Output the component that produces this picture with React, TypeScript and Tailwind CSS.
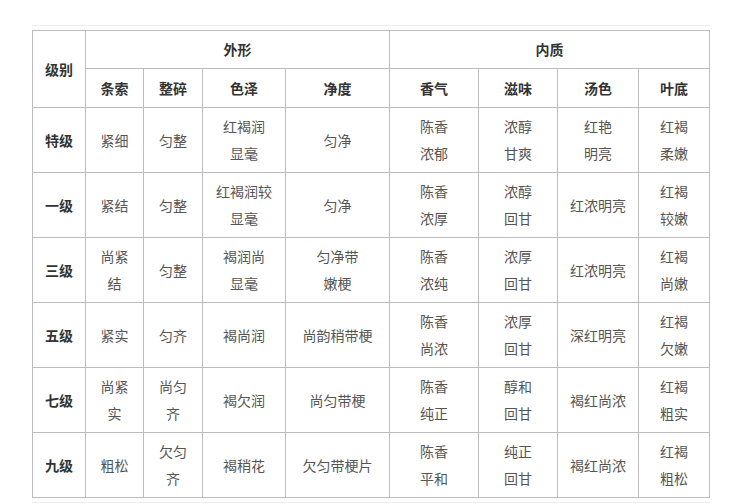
import React from "react";

// One grade row: name plus cell texts, each cell split into its display lines
interface GradeRow {
  grade: string;
  cells: string[][];
}

const colWidths = [53, 58, 59, 83, 104, 89, 79, 81, 71];

const subHeads = ["条索", "整碎", "色泽", "净度", "香气", "滋味", "汤色", "叶底"];

const rows: GradeRow[] = [
  {
    grade: "特级",
    cells: [["紧细"], ["匀整"], ["红褐润", "显毫"], ["匀净"], ["陈香", "浓郁"], ["浓醇", "甘爽"], ["红艳", "明亮"], ["红褐", "柔嫩"]],
  },
  {
    grade: "一级",
    cells: [["紧结"], ["匀整"], ["红褐润较", "显毫"], ["匀净"], ["陈香", "浓厚"], ["浓醇", "回甘"], ["红浓明亮"], ["红褐", "较嫩"]],
  },
  {
    grade: "三级",
    cells: [["尚紧", "结"], ["匀整"], ["褐润尚", "显毫"], ["匀净带", "嫩梗"], ["陈香", "浓纯"], ["浓厚", "回甘"], ["红浓明亮"], ["红褐", "尚嫩"]],
  },
  {
    grade: "五级",
    cells: [["紧实"], ["匀齐"], ["褐尚润"], ["尚韵稍带梗"], ["陈香", "尚浓"], ["浓厚", "回甘"], ["深红明亮"], ["红褐", "欠嫩"]],
  },
  {
    grade: "七级",
    cells: [["尚紧", "实"], ["尚匀", "齐"], ["褐欠润"], ["尚匀带梗"], ["陈香", "纯正"], ["醇和", "回甘"], ["褐红尚浓"], ["红褐", "粗实"]],
  },
  {
    grade: "九级",
    cells: [["粗松"], ["欠匀", "齐"], ["褐稍花"], ["欠匀带梗片"], ["陈香", "平和"], ["纯正", "回甘"], ["褐红尚浓"], ["红褐", "粗松"]],
  },
];

const cellBase = "border border-[#bdbdbd] text-center align-middle p-0";

const TeaGradeTable: React.FC = () => {
  return (
    <div
      className="min-h-[504px] w-[736px] bg-white"
      style={{ fontFamily: '"Noto Sans CJK SC", "Noto Sans", sans-serif' }}
    >
      <div className="ml-[32px] pt-[25px]">
        <div className="w-[678px] border-t border-b border-[#ececec] py-[4px]">
          <table className="w-[677px] table-fixed border-collapse text-[14px]">
            <colgroup>
              {colWidths.map((w, i) => (
                <col key={i} style={{ width: w }} />
              ))}
            </colgroup>
            <thead>
              <tr className="h-[38px]">
                <th rowSpan={2} className={`${cellBase} font-bold text-[#333]`}>
                  级别
                </th>
                <th colSpan={4} className={`${cellBase} font-bold text-[#333]`}>
                  外形
                </th>
                <th colSpan={4} className={`${cellBase} font-bold text-[#333]`}>
                  内质
                </th>
              </tr>
              <tr className="h-[39px]">
                {subHeads.map((h) => (
                  <th key={h} className={`${cellBase} font-bold text-[#333]`}>
                    {h}
                  </th>
                ))}
              </tr>
            </thead>
            <tbody>
              {rows.map((row) => (
                <tr key={row.grade} className="h-[65px]">
                  <td className={`${cellBase} font-bold text-[#333]`}>{row.grade}</td>
                  {row.cells.map((lines, i) => (
                    <td key={i} className={`${cellBase} text-[#555] leading-[27px]`}>
                      {lines.map((l, j) => (
                        <div key={j}>{l}</div>
                      ))}
                    </td>
                  ))}
                </tr>
              ))}
            </tbody>
          </table>
        </div>
      </div>
    </div>
  );
};

export default TeaGradeTable;
